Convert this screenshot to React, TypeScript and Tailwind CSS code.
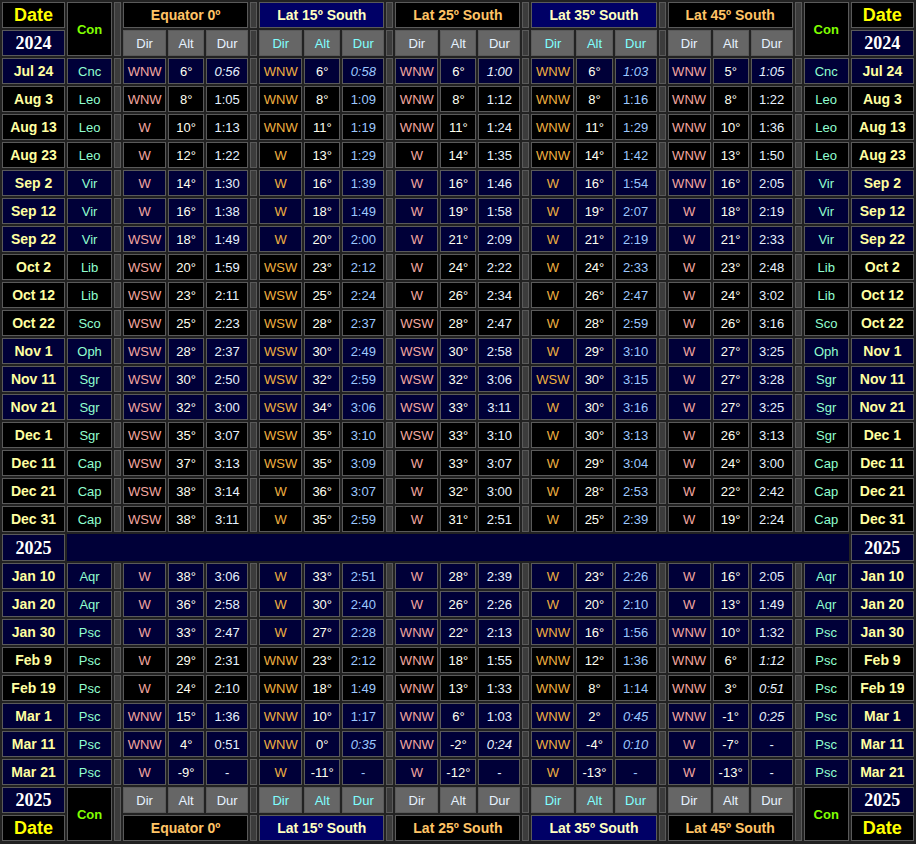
import React from "react";

const rows: [string, string, string][] = [
  ["Jul 24", "Cnc", "WNW 6 *0:56|WNW 6 *0:58|WNW 6 *1:00|WNW 6 *1:03|WNW 5 *1:05"],
  ["Aug 3", "Leo", "WNW 8 1:05|WNW 8 1:09|WNW 8 1:12|WNW 8 1:16|WNW 8 1:22"],
  ["Aug 13", "Leo", "W 10 1:13|WNW 11 1:19|WNW 11 1:24|WNW 11 1:29|WNW 10 1:36"],
  ["Aug 23", "Leo", "W 12 1:22|W 13 1:29|W 14 1:35|WNW 14 1:42|WNW 13 1:50"],
  ["Sep 2", "Vir", "W 14 1:30|W 16 1:39|W 16 1:46|W 16 1:54|WNW 16 2:05"],
  ["Sep 12", "Vir", "W 16 1:38|W 18 1:49|W 19 1:58|W 19 2:07|W 18 2:19"],
  ["Sep 22", "Vir", "WSW 18 1:49|W 20 2:00|W 21 2:09|W 21 2:19|W 21 2:33"],
  ["Oct 2", "Lib", "WSW 20 1:59|WSW 23 2:12|W 24 2:22|W 24 2:33|W 23 2:48"],
  ["Oct 12", "Lib", "WSW 23 2:11|WSW 25 2:24|W 26 2:34|W 26 2:47|W 24 3:02"],
  ["Oct 22", "Sco", "WSW 25 2:23|WSW 28 2:37|WSW 28 2:47|W 28 2:59|W 26 3:16"],
  ["Nov 1", "Oph", "WSW 28 2:37|WSW 30 2:49|WSW 30 2:58|W 29 3:10|W 27 3:25"],
  ["Nov 11", "Sgr", "WSW 30 2:50|WSW 32 2:59|WSW 32 3:06|WSW 30 3:15|W 27 3:28"],
  ["Nov 21", "Sgr", "WSW 32 3:00|WSW 34 3:06|WSW 33 3:11|W 30 3:16|W 27 3:25"],
  ["Dec 1", "Sgr", "WSW 35 3:07|WSW 35 3:10|WSW 33 3:10|W 30 3:13|W 26 3:13"],
  ["Dec 11", "Cap", "WSW 37 3:13|WSW 35 3:09|W 33 3:07|W 29 3:04|W 24 3:00"],
  ["Dec 21", "Cap", "WSW 38 3:14|W 36 3:07|W 32 3:00|W 28 2:53|W 22 2:42"],
  ["Dec 31", "Cap", "WSW 38 3:11|W 35 2:59|W 31 2:51|W 25 2:39|W 19 2:24"],
];
const rows2: [string, string, string][] = [
  ["Jan 10", "Aqr", "W 38 3:06|W 33 2:51|W 28 2:39|W 23 2:26|W 16 2:05"],
  ["Jan 20", "Aqr", "W 36 2:58|W 30 2:40|W 26 2:26|W 20 2:10|W 13 1:49"],
  ["Jan 30", "Psc", "W 33 2:47|W 27 2:28|WNW 22 2:13|WNW 16 1:56|WNW 10 1:32"],
  ["Feb 9", "Psc", "W 29 2:31|WNW 23 2:12|WNW 18 1:55|WNW 12 1:36|WNW 6 *1:12"],
  ["Feb 19", "Psc", "W 24 2:10|WNW 18 1:49|WNW 13 1:33|WNW 8 1:14|WNW 3 *0:51"],
  ["Mar 1", "Psc", "WNW 15 1:36|WNW 10 1:17|WNW 6 1:03|WNW 2 *0:45|WNW -1 *0:25"],
  ["Mar 11", "Psc", "WNW 4 0:51|WNW 0 *0:35|WNW -2 *0:24|WNW -4 *0:10|W -7 -"],
  ["Mar 21", "Psc", "W -9 -|W -11 -|W -12 -|W -13 -|W -13 -"],
];

const groups = [
  { t: "Equator 0º", hdr: "bg-black text-[#ffc466]", sub: "text-[#e6f2ff]", dir: "text-[#f4a8a0]", dur: "text-[#e6f2ff]" },
  { t: "Lat 15º South", hdr: "bg-[#000066] text-[#ffffc0]", sub: "text-[#80ffff]", dir: "text-[#f0b040]", dur: "text-[#9cc8ff]" },
  { t: "Lat 25º South", hdr: "bg-black text-[#ffc466]", sub: "text-[#e6f2ff]", dir: "text-[#f4a8a0]", dur: "text-[#e6f2ff]" },
  { t: "Lat 35º South", hdr: "bg-[#000066] text-[#ffffc0]", sub: "text-[#80ffff]", dir: "text-[#f0b040]", dur: "text-[#9cc8ff]" },
  { t: "Lat 45º South", hdr: "bg-black text-[#ffc466]", sub: "text-[#e6f2ff]", dir: "text-[#f4a8a0]", dur: "text-[#e6f2ff]" },
];

const cell = "border border-[#5a5a5a] text-center p-0 leading-none";
const sep = "border border-[#5a5a5a] bg-[#3c3c3c] p-0";
const navyMonths = ["Jul", "Sep", "Nov", "Jan", "Mar"];

function Sep({ rs }: { rs?: number }) {
  return <td rowSpan={rs} className={sep}></td>;
}

function Year({ y }: { y: string }) {
  return (
    <td className={`${cell} bg-[#000038] text-white text-[18px] font-bold font-[Liberation_Serif,serif]`}>{y}</td>
  );
}
function DateHead() {
  return <td className={`${cell} bg-black text-[#ffff00] text-[18px] font-bold`}>Date</td>;
}
function ConHead() {
  return (
    <td rowSpan={2} className={`${cell} bg-black text-[#80ff00] text-[13px] font-bold`}>
      Con
    </td>
  );
}

function GroupTitles() {
  return (
    <>
      {groups.map((g, i) => (
        <React.Fragment key={i}>
          <td colSpan={3} className={`${cell} ${g.hdr} text-[14px] font-bold`}>
            {g.t}
          </td>
          {i < 4 && <Sep />}
        </React.Fragment>
      ))}
    </>
  );
}
function SubHeads() {
  return (
    <>
      {groups.map((g, i) => (
        <React.Fragment key={i}>
          {["Dir", "Alt", "Dur"].map((s) => (
            <td key={s} className={`${cell} bg-[#666666] ${g.sub} text-[13px]`}>
              {s}
            </td>
          ))}
          {i < 4 && <Sep />}
        </React.Fragment>
      ))}
    </>
  );
}

function DataRow({ r }: { r: [string, string, string] }) {
  const bg = navyMonths.includes(r[0].slice(0, 3)) ? "bg-[#000038]" : "bg-black";
  const vals = r[2].split("|").map((s) => s.split(" "));
  return (
    <tr className="h-[26px]">
      <td className={`${cell} ${bg} text-[#ffffa0] text-[14px] font-bold`}>{r[0]}</td>
      <td className={`${cell} ${bg} text-[#90ffd0] text-[13px]`}>{r[1]}</td>
      <Sep />
      {vals.map((v, i) => {
        const it = v[2].startsWith("*");
        return (
          <React.Fragment key={i}>
            <td className={`${cell} ${bg} ${groups[i].dir} text-[13px]`}>{v[0]}</td>
            <td className={`${cell} ${bg} text-[#fffff0] text-[13px]`}>{v[1]}°</td>
            <td className={`${cell} ${bg} ${groups[i].dur} text-[13px] ${it ? "italic" : ""}`}>
              {it ? v[2].slice(1) : v[2]}
            </td>
            <Sep />
          </React.Fragment>
        );
      })}
      <td className={`${cell} ${bg} text-[#90ffd0] text-[13px]`}>{r[1]}</td>
      <td className={`${cell} ${bg} text-[#ffffa0] text-[14px] font-bold`}>{r[0]}</td>
    </tr>
  );
}

export default function App() {
  const widths = [63, 45, 7, ...Array(5).fill([43, 36, 42, 7]).flat().slice(0, 19), 7, 45, 63];
  return (
    <div className="w-[916px] h-[844px] bg-[#222222] font-[Liberation_Sans,Arial,sans-serif] overflow-hidden">
      <table className="table-fixed w-[916px] border-separate border-spacing-[2px]">
        <colgroup>
          {widths.map((w, i) => (
            <col key={i} style={{ width: w }} />
          ))}
        </colgroup>
        <tbody>
          <tr className="h-[26px]">
            <DateHead />
            <ConHead />
            <Sep rs={2} />
            <GroupTitles />
            <Sep rs={2} />
            <ConHead />
            <DateHead />
          </tr>
          <tr className="h-[26px]">
            <Year y="2024" />
            <SubHeads />
            <Year y="2024" />
          </tr>
          {rows.map((r) => (
            <DataRow key={r[0]} r={r} />
          ))}
          <tr className="h-[27px]">
            <Year y="2025" />
            <td colSpan={23} className="bg-[#000038] p-0"></td>
            <Year y="2025" />
          </tr>
          {rows2.map((r) => (
            <DataRow key={r[0]} r={r} />
          ))}
          <tr className="h-[26px]">
            <Year y="2025" />
            <ConHead />
            <Sep rs={2} />
            <SubHeads />
            <Sep rs={2} />
            <ConHead />
            <Year y="2025" />
          </tr>
          <tr className="h-[26px]">
            <DateHead />
            <GroupTitles />
            <DateHead />
          </tr>
        </tbody>
      </table>
    </div>
  );
}
